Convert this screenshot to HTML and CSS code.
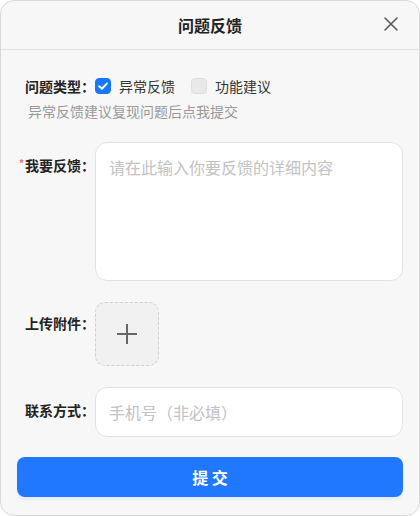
FILE: index.html
```html
<!DOCTYPE html>
<html lang="zh-CN">
<head>
  <meta charset="UTF-8" />
  <title>问题反馈</title>
  <link rel="stylesheet" href="styles.css">
</head>
<body>
  <div class="dialog">
    <div class="dialog-header">
      <span class="dialog-title">问题反馈</span>
      <span class="close-btn">
        <svg width="14" height="14" viewBox="0 0 14 14">
          <path d="M1 1L13 13M13 1L1 13" stroke="#555" stroke-width="1.5" fill="none" stroke-linecap="round"/>
        </svg>
      </span>
    </div>

    <div class="dialog-body">
      <div class="type-row">
        <span class="label">问题类型：</span>
        <label class="check">
          <span class="box checked">
            <svg width="12" height="12" viewBox="0 0 12 12">
              <path d="M2.2 6.2L4.9 8.8L9.8 3.6" stroke="#fff" stroke-width="2" fill="none" stroke-linecap="round" stroke-linejoin="round"/>
            </svg>
          </span>
          异常反馈
        </label>
        <label class="check">
          <span class="box"></span>
          功能建议
        </label>
      </div>
      <p class="hint">异常反馈建议复现问题后点我提交</p>

      <div class="form-row row-feedback">
        <span class="label"><i class="required">*</i>我要反馈：</span>
        <div class="field textarea">请在此输入你要反馈的详细内容</div>
      </div>

      <div class="form-row row-upload">
        <span class="label">上传附件：</span>
        <div class="upload">
          <svg width="22" height="22" viewBox="0 0 22 22">
            <path d="M11 1V21M1 11H21" stroke="#666" stroke-width="2" fill="none"/>
          </svg>
        </div>
      </div>

      <div class="form-row row-contact">
        <span class="label">联系方式：</span>
        <div class="field input">手机号（非必填）</div>
      </div>

      <button class="submit-btn">提 交</button>
    </div>
  </div>
</body>
</html>
```

FILE: styles.css
```css
* {
  box-sizing: border-box;
}
body {
  margin: 0;
  background: #fff;
  font-family: "Noto Sans CJK SC", "Noto Sans", sans-serif;
  color: #333;
}
.dialog {
  width: 420px;
  height: 516px;
  background: #f7f7f7;
  border: 1px solid #d9d9d9;
  border-radius: 14px;
  overflow: hidden;
}
.dialog-header {
  height: 49px;
  border-bottom: 1px solid #e3e3e3;
  display: flex;
  align-items: center;
  justify-content: center;
  position: relative;
}
.dialog-title {
  font-size: 16px;
  font-weight: 700;
  color: #222;
}
.close-btn {
  position: absolute;
  right: 21px;
  top: 16px;
  line-height: 0;
}
.dialog-body {
  padding: 26px 16px 0 16px;
}
.label {
  width: 78px;
  flex-shrink: 0;
  text-align: right;
  font-size: 14px;
  font-weight: 700;
  color: #222;
  white-space: nowrap;
}
.type-row {
  display: flex;
  align-items: center;
  height: 20px;
}
.check {
  display: flex;
  align-items: center;
  font-size: 14px;
  color: #333;
  margin-right: 16px;
}
.box {
  width: 16px;
  height: 16px;
  border-radius: 4px;
  background: #e9e9e9;
  border: 1px solid #dedede;
  margin-right: 8px;
  display: flex;
  align-items: center;
  justify-content: center;
}
.box.checked {
  background: #1677ff;
  border-color: #1677ff;
}
.hint {
  margin: 5px 0 0 11px;
  font-size: 14px;
  color: #999;
  line-height: 20px;
}
.form-row {
  display: flex;
  align-items: flex-start;
}
.row-feedback {
  margin-top: 21px;
}
.row-feedback .label {
  padding-top: 13px;
}
.required {
  font-style: normal;
  color: #f56c6c;
  font-size: 10px;
  vertical-align: 4px;
  margin-right: 1px;
}
.field {
  flex: 1;
  background: #fff;
  border: 1px solid #e2e2e2;
  border-radius: 12px;
  color: #c2c2c2;
  font-size: 16px;
  padding: 0 13px;
}
.textarea {
  height: 139px;
  padding-top: 12px;
  line-height: 24px;
}
.row-upload {
  margin-top: 21px;
}
.row-upload .label {
  padding-top: 11px;
}
.upload {
  width: 64px;
  height: 64px;
  border: 1px dashed #cfcfcf;
  border-radius: 10px;
  background: #f1f1f1;
  display: flex;
  align-items: center;
  justify-content: center;
}
.row-contact {
  margin-top: 21px;
  align-items: center;
}
.row-contact .label {
  margin-top: -4px;
}
.input {
  height: 50px;
  display: flex;
  align-items: center;
}
.submit-btn {
  display: block;
  width: 386px;
  height: 40px;
  margin: 20px 0 0 0;
  border: none;
  border-radius: 8px;
  background: #1f78ff;
  color: #fff;
  font-family: inherit;
  font-size: 16px;
  font-weight: 700;
  box-shadow: 0 3px 3px #e6eefa;
}
```
